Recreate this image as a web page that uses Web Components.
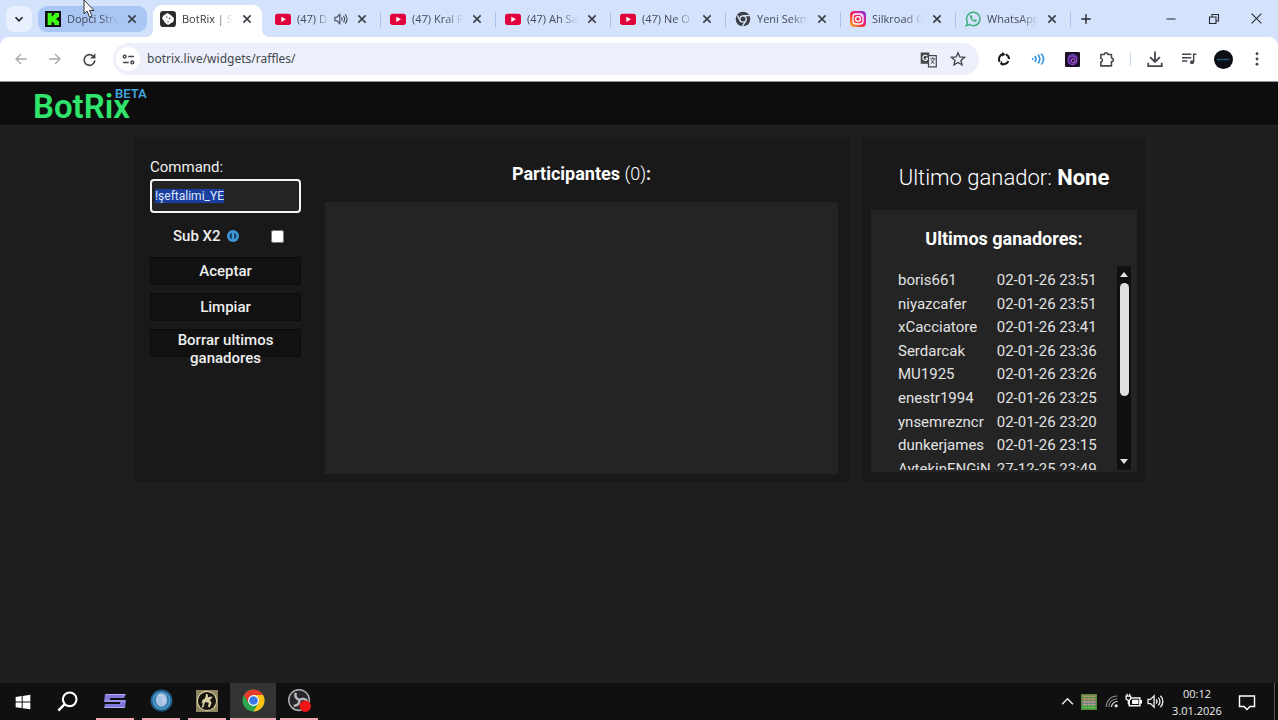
<!DOCTYPE html>
<html lang="es">
<head>
<meta charset="utf-8">
<title>BotRix | Sorteos</title>
<style>
    html, body {
        height: 100%;
        margin: 0;
    }
    body {
        background: #1e1e1e;
        font-family: Roboto, "Liberation Sans", sans-serif;
        overflow: hidden;
    }
</style>
</head>
<body>
<app-desktop></app-desktop>

<script>
// every icon is drawn on a 24x24 grid
const ICONS = {
    chevronDown: '<path d="M6 9l6 6 6-6" fill="none" stroke="currentColor" stroke-width="3"/>',
    chevronUp: '<path d="M2 17L12 7l10 10" fill="none" stroke="currentColor" stroke-width="2.6"/>',
    close: '<path d="M6.500 6.500l11 11M17.500 6.500l-11 11" fill="none" stroke="currentColor" stroke-width="2.4"/>',
    plus: '<path d="M12 4v16M4 12h16" fill="none" stroke="currentColor" stroke-width="2.4"/>',
    minimize: '<path d="M3 12h18" stroke="currentColor" stroke-width="2"/>',
    restore: '<path d="M3 8h13v13H3zM8 8V3h13v13h-5" fill="none" stroke="currentColor" stroke-width="2.2"/>',
    windowClose: '<path d="M3 3l18 18M21 3L3 21" stroke="currentColor" stroke-width="1.9"/>',
    kick: '<rect width="24" height="24" fill="#111"/><path d="M4 3h6v5h2V6h2V3h7v6h-2v2h-2v2h2v2h2v6h-7v-3h-2v-2h-2v5H4z" fill="#3dff14"/>',
    botrix: '<rect x="0" y="0" width="24" height="24" rx="5" fill="#2b2c30"/><path d="M11 3l5 3 5 5-1 5-8 5-4-3-5-7 2-4z" fill="#fff"/><circle cx="10" cy="9" r="1.300" fill="#777"/><circle cx="14.500" cy="11" r="1.300" fill="#555"/><circle cx="12" cy="16" r="1.300" fill="#888"/>',
    youtube: '<rect x="0" y="4" width="24" height="17" rx="4" fill="#e0023a"/><path d="M9.500 8.500v8l7-4z" fill="#fff"/>',
    chromeGrey: '<circle cx="12" cy="12" r="11" fill="#3c4248"/><circle cx="12" cy="12" r="4.800" fill="#3c4248" stroke="#d9e4fb" stroke-width="2"/><path d="M12 7H22M7.700 14.500L3 6M16.300 14.500L11 23" stroke="#d9e4fb" stroke-width="2" fill="none"/>',
    instagram: '<defs><linearGradient id="ig" x1="0" y1="1" x2="1" y2="0"><stop offset="0" stop-color="#fdbf2d"/><stop offset=".4" stop-color="#f5343d"/><stop offset=".7" stop-color="#d6219a"/><stop offset="1" stop-color="#6a3af0"/></linearGradient></defs><rect width="24" height="24" rx="6" fill="url(#ig)"/><rect x="4.500" y="4.500" width="15" height="15" rx="4.500" fill="none" stroke="#fff" stroke-width="2"/><circle cx="12" cy="12" r="3.600" fill="none" stroke="#fff" stroke-width="2"/><circle cx="16.600" cy="7.400" r="1.200" fill="#fff"/>',
    whatsapp: '<path d="M2 22l1.600-5.400A10 10 0 1 1 7.300 20.500z" fill="none" stroke="#3fae7d" stroke-width="2.200"/><path d="M8.200 6.500c-3 2.500 3.300 11.500 8.300 9.500 1.500-1.200 1.300-2.300.500-2.800l-2-1-1.500 1.500c-1.600-.600-2.700-1.800-3.300-3.200l1-1.500-1-2.500z" fill="#3fae7d"/>',
    speaker: '<path d="M1.500 9v6h3.500l5 5V4L5 9z" fill="none" stroke="currentColor" stroke-width="1.900"/><path d="M13 9c1.500 2 1.500 4 0 6M16 6.500c3 3 3 8 0 11M19 4c4.500 4.500 4.500 11.500 0 16" fill="none" stroke="currentColor" stroke-width="1.900"/>',
    back: '<path d="M22 12H4M12 3.500L3.500 12l8.500 8.500" fill="none" stroke="currentColor" stroke-width="2.200"/>',
    forward: '<path d="M2 12h18M12 3.500l8.500 8.500-8.500 8.500" fill="none" stroke="currentColor" stroke-width="2.200"/>',
    reload: '<path d="M20 9.500A8.600 8.600 0 1 0 20.600 13.500" fill="none" stroke="currentColor" stroke-width="2.600"/><path d="M21.500 2v8.500H13z" fill="currentColor"/>',
    tune: '<g fill="none" stroke="currentColor" stroke-width="2.600"><circle cx="5" cy="6.500" r="2.600"/><circle cx="19" cy="17.500" r="2.600"/><path d="M11.500 6.500H22M2 17.500h10.500"/></g>',
    translate: '<path d="M1 2h12l2 16H1z" fill="#44474c"/><path d="M10.500 7.500a3.600 3.600 0 1 0 .5 3H8" fill="none" stroke="#fff" stroke-width="1.600"/><path d="M12 6.500h11v16H12z" fill="#f2f3fb" stroke="#44474c" stroke-width="1.700"/><path d="M14.500 11h7M18 9v2M20 11c-.600 3-2.500 5.500-5 7M15.800 13c1 2.200 2.600 3.800 4.700 5" fill="none" stroke="#44474c" stroke-width="1.400"/>',
    star: '<path d="M12 2.500l2.700 6.400 7 .600-5.300 4.600 1.600 6.800-6-3.600-6 3.600 1.600-6.800L2.300 9.500l7-.600z" fill="none" stroke="currentColor" stroke-width="2"/>',
    sync: '<path d="M11 3.500A8.600 8.600 0 0 0 5 17M8 20a8.600 8.600 0 0 0 11.500-4.500M20.600 12A8.600 8.600 0 0 0 15 4" fill="none" stroke="#15171a" stroke-width="3.400"/><path d="M9 0l5.500 4L9 8zM10.500 24L5 20.500 8 15z" fill="#15171a"/>',
    waves: '<circle cx="3" cy="12" r="1.800" fill="#3598e6"/><path d="M6.500 7c2.500 3 2.500 7 0 10M12 4.500c4 4 4 11 0 15M17.500 2.500c5.500 5.500 5.500 13.500 0 19" fill="none" stroke="#3598e6" stroke-width="2.800"/>',
    orbit: '<rect width="24" height="24" rx="2" fill="#1a1028"/><circle cx="12" cy="13" r="7" fill="#4b1f7a" stroke="#8f48cf" stroke-width="2"/><circle cx="13" cy="14" r="3" fill="#1a1028" stroke="#d07ae8" stroke-width="1.400"/><path d="M4 8c5-6 13-5 16 1" fill="none" stroke="#6b4bd0" stroke-width="1.600"/>',
    puzzle: '<path d="M4 5h5c0-3.500 5-3.500 5 0h5v5c3.500 0 3.500 5 0 5v6H4v-5.500c3-.500 3-4.500 0-5z" fill="none" stroke="currentColor" stroke-width="2.200" stroke-linejoin="round"/>',
    download: '<path d="M12 2v13M5.500 9.500L12 16l6.500-6.500M3 17v4.500h18V17" fill="none" stroke="currentColor" stroke-width="2.400"/>',
    music: '<path d="M1.500 5h14M1.500 10h14M1.500 15h8M19 17V5h4" fill="none" stroke="currentColor" stroke-width="2.200"/><circle cx="16.500" cy="17" r="3" fill="currentColor"/>',
    avatar: '<circle cx="12" cy="12" r="12" fill="#0b0e13"/><path d="M4 12h16" stroke="#2f6f96" stroke-width="1.800" stroke-dasharray="2 .600"/>',
    dots: '<g fill="currentColor"><circle cx="12" cy="5" r="1.900"/><circle cx="12" cy="12" r="1.900"/><circle cx="12" cy="19" r="1.900"/></g>',
    info: '<circle cx="12" cy="12" r="12" fill="#3d97d6"/><path d="M9.500 5.500a7 7 0 0 0 0 13zM14.500 5.500a7 7 0 0 1 0 13z" fill="#173a5c"/>',
    windows: '<path d="M1 4.500l9-1.400v8.300H1zM11.500 2.900L23 1v10.400H11.500zM1 12.800h9v8.300l-9-1.400zM11.500 12.800H23V23l-11.500-1.800z" fill="#fff"/>',
    search: '<circle cx="14.500" cy="9.500" r="7.800" fill="none" stroke="#fff" stroke-width="2.400"/><path d="M8.800 15L1.500 22.500" stroke="#fff" stroke-width="2.800"/>',
    sLogo: '<path d="M3 5h20l-2 4H7v2h16l-1 8H1l1-4h15v-2H1l1-8z" fill="#8078d8"/><path d="M3 5.500h19M2 12h20M2 18.500h20" stroke="#b3adf5" stroke-width="1"/>',
    orb: '<circle cx="12" cy="12" r="11.500" fill="#235a86"/><circle cx="12" cy="12" r="9.500" fill="#4a9ccc"/><circle cx="12" cy="12" r="7.800" fill="#3478aa"/><ellipse cx="12" cy="11.500" rx="6" ry="7" fill="#a9c3e4"/><path d="M9 6.500c4-1 7 3 5 8" stroke="#d5e2f2" fill="none"/>',
    rider: '<rect width="24" height="24" fill="#8d8560"/><circle cx="12" cy="12" r="10.500" fill="#17150f" stroke="#d8cfa2" stroke-width="1.200"/><path d="M11 4l2 1v3l4-1 1 1-3 3 2 3-2 5-2-1 1-4-4-1-2 6H6l2-5-2 1 1-4 3-2z" fill="#d8cfa2"/>',
    chrome: '<circle cx="12" cy="12" r="11.500" fill="#2da44e"/><path d="M12 23.500A11.500 11.500 0 0 0 22 6.300H12l4.900 8.500z" fill="#fbc116"/><path d="M2 6.300a11.500 11.500 0 0 1 20 0H12l-4.900 8.500z" fill="#e33b2e"/><circle cx="12" cy="12" r="5.700" fill="#fff"/><circle cx="12" cy="12" r="4.500" fill="#3b78e7"/>',
    obs: '<circle cx="11.500" cy="11.500" r="10.800" fill="#25252a" stroke="#a9a9ad" stroke-width="1.600"/><path d="M8 4c-1 4 1 6.500 4 7.500 0 4-2 6-6 6M12 11.500c3-2 6-1.500 8 1" fill="none" stroke="#b9b9bd" stroke-width="2.600"/><circle cx="18" cy="18" r="6" fill="#f01414"/>',
    pixels: '<rect width="24" height="24" fill="#4f8a3c"/><rect x="2" y="2" width="20" height="9" fill="#a98a62"/><rect x="2" y="11" width="20" height="6" fill="#b884a8"/><rect x="2" y="17" width="20" height="5" fill="#55b848"/><path d="M2 5h20M2 9h20M2 14h20M2 19h20" stroke="#2f8a55" stroke-width="1.200"/><path d="M6 3v18M12 3v18M18 3v18" stroke="#d8c86a" stroke-width="1.400" stroke-dasharray="1.500 2.500"/>',
    wifi: '<path d="M2 22C2 11 11 2 23 2M7 22c0-8 7-15 16-15" fill="none" stroke="#8b8e92" stroke-width="1.900"/><path d="M12 22c0-5.500 5-10 11-10" fill="none" stroke="#e8e8e8" stroke-width="2.200"/><circle cx="20.500" cy="20" r="3" fill="#e8e8e8"/>',
    battery: '<rect x="6" y="7" width="15" height="11" fill="none" stroke="#fff" stroke-width="2"/><path d="M22.500 10v5" stroke="#fff" stroke-width="3"/><rect x="10" y="9.500" width="9" height="6" fill="#fff"/><path d="M1.500 4.500h6.500v4L4.750 11 1.500 8.500zM3 1v4M6.500 1v4M4.750 11v5" stroke="#fff" stroke-width="1.800" fill="#101010"/>',
    notice: '<path d="M2 4h20v14h-6l-4 4-4-4H2z" fill="none" stroke="#fff" stroke-width="1.900"/>'
}

class UiIcon extends HTMLElement {
    constructor() {
        super()
        this.attachShadow({ mode: 'open' })
    }

    connectedCallback() {
        const size = this.getAttribute('size') || 16
        this.shadowRoot.innerHTML = `
            <style>
                :host {
                    display: block;
                    flex: none;
                }
                svg {
                    display: block;
                }
            </style>
            <svg width="${size}" height="${size}" viewBox="0 0 24 24" aria-hidden="true">${ICONS[this.getAttribute('name')]}</svg>
        `
    }
}

customElements.define('ui-icon', UiIcon)


class BrowserTab extends HTMLElement {
    constructor() {
        super()
        this.attachShadow({ mode: 'open' })
    }

    connectedCallback() {
        const audio = this.hasAttribute('audio') ? '<ui-icon name="speaker" size="14"></ui-icon>' : ''
        this.shadowRoot.innerHTML = `
            <style>
                :host {
                    position: relative;
                    display: flex;
                    align-items: center;
                    gap: 6px;
                    flex: 0 1 109px;
                    min-width: 0;
                    height: 26px;
                    box-sizing: border-box;
                    margin: 6px 6px 5px 0;
                    padding: 0 7px;
                    color: #434a58;
                    border-radius: 9px;
                }
                :host([hovered]) {
                    background: #a9c6f5;
                }
                :host([active]) {
                    height: 32px;
                    margin: 5px 6px 0 0;
                    padding-bottom: 4px;
                    background: #fff;
                    color: #33373d;
                    border-radius: 9px 9px 0 0;
                }
                /* curved feet of the selected tab */
                :host([active])::before, :host([active])::after {
                    content: "";
                    position: absolute;
                    bottom: 0;
                    width: 8px;
                    height: 8px;
                }
                :host([active])::before {
                    right: 100%;
                    background: radial-gradient(circle at 0 0, transparent 8px, #fff 8px);
                }
                :host([active])::after {
                    left: 100%;
                    background: radial-gradient(circle at 100% 0, transparent 8px, #fff 8px);
                }
                :host([divided])::after {
                    content: "";
                    position: absolute;
                    right: -4px;
                    width: 1px;
                    height: 15px;
                    background: #a8c1ec;
                }
                .title {
                    flex: 1;
                    min-width: 0;
                    overflow: hidden;
                    white-space: nowrap;
                    font: 11px/18px "Open Sans", sans-serif;
                    -webkit-mask-image: linear-gradient(to right, #000 65%, transparent);
                    mask-image: linear-gradient(to right, #000 65%, transparent);
                }
                button {
                    flex: none;
                    padding: 0;
                    border: 0;
                    background: none;
                    color: #3b4048;
                }
            </style>
            <ui-icon name="${this.getAttribute('icon')}"></ui-icon>
            <span class="title"><slot></slot></span>
            ${audio}
            <button type="button" aria-label="Cerrar"><ui-icon name="close" size="16"></ui-icon></button>
        `
    }
}

customElements.define('browser-tab', BrowserTab)


class TabStrip extends HTMLElement {
    constructor() {
        super()
        this.attachShadow({ mode: 'open' })
        this.shadowRoot.innerHTML = `
            <style>
                :host {
                    display: flex;
                    align-items: center;
                    height: 37px;
                    background: #d5e2fc;
                    color: #24272c;
                }
                button {
                    display: flex;
                    align-items: center;
                    justify-content: center;
                    flex: none;
                    padding: 0;
                    border: 0;
                    background: none;
                    color: inherit;
                }
                .list {
                    width: 26px;
                    height: 26px;
                    margin: 0 6px;
                    border-radius: 8px;
                    background: #e8f0fe;
                }
                .tabs {
                    display: flex;
                    align-items: center;
                    flex: 0 1 1035px;
                    min-width: 0;
                }
                .new {
                    width: 26px;
                    height: 26px;
                }
                .controls {
                    display: flex;
                    margin-left: auto;
                }
                .controls button {
                    width: 43px;
                    height: 37px;
                }
            </style>
            <button class="list" type="button" aria-label="Buscar pestañas"><ui-icon name="chevronDown" size="14"></ui-icon></button>
            <div class="tabs">
                <browser-tab icon="kick" hovered>Dopci Stre</browser-tab>
                <browser-tab icon="botrix" active>BotRix | So</browser-tab>
                <browser-tab icon="youtube" audio divided>(47) D</browser-tab>
                <browser-tab icon="youtube" divided>(47) Kral F</browser-tab>
                <browser-tab icon="youtube" divided>(47) Ah Sa</browser-tab>
                <browser-tab icon="youtube" divided>(47) Ne O</browser-tab>
                <browser-tab icon="chromeGrey" divided>Yeni Sekm</browser-tab>
                <browser-tab icon="instagram" divided>Silkroad O</browser-tab>
                <browser-tab icon="whatsapp" divided>WhatsApp</browser-tab>
            </div>
            <button class="new" type="button" aria-label="Nueva pestaña"><ui-icon name="plus" size="14"></ui-icon></button>
            <div class="controls">
                <button type="button" aria-label="Minimizar"><ui-icon name="minimize" size="12"></ui-icon></button>
                <button type="button" aria-label="Restaurar"><ui-icon name="restore" size="12"></ui-icon></button>
                <button type="button" aria-label="Cerrar"><ui-icon name="windowClose" size="13"></ui-icon></button>
            </div>
        `
    }
}

customElements.define('tab-strip', TabStrip)


class AddressBar extends HTMLElement {
    constructor() {
        super()
        this.attachShadow({ mode: 'open' })
        this.shadowRoot.innerHTML = `
            <style>
                :host {
                    display: block;
                    background: #d5e2fc;
                }
                .bar {
                    display: flex;
                    align-items: center;
                    height: 45px;
                    padding: 0 4px;
                    background: #fff;
                    border-radius: 9px 9px 0 0;
                    border-bottom: 1px solid #8d9095;
                    box-sizing: border-box;
                    color: #43474d;
                }
                button {
                    display: flex;
                    align-items: center;
                    justify-content: center;
                    flex: none;
                    width: 34px;
                    height: 32px;
                    padding: 0;
                    border: 0;
                    background: none;
                    color: inherit;
                }
                button:disabled {
                    color: #a5a8ac;
                }
                .url {
                    display: flex;
                    align-items: center;
                    flex: 1;
                    height: 32px;
                    margin: 0 8px 0 7px;
                    padding: 0 6px 0 3px;
                    border-radius: 16px;
                    background: #edf0fa;
                }
                .url .site {
                    width: 24px;
                    height: 24px;
                    border-radius: 12px;
                    background: #fff;
                }
                .url .action {
                    width: 30px;
                }
                input {
                    flex: 1;
                    min-width: 0;
                    margin: 0 0 0 7px;
                    padding: 0;
                    border: 0;
                    outline: 0;
                    background: none;
                    color: #43474e;
                    font: 12px/20px "Noto Sans", sans-serif;
                }
                .divider {
                    width: 1px;
                    height: 14px;
                    margin: 0 7px;
                    background: #ccd9f3;
                }
            </style>
            <div class="bar">
                <button type="button" disabled aria-label="Atrás"><ui-icon name="back" size="14"></ui-icon></button>
                <button type="button" disabled aria-label="Adelante"><ui-icon name="forward" size="14"></ui-icon></button>
                <button type="button" aria-label="Recargar"><ui-icon name="reload" size="15"></ui-icon></button>
                <div class="url">
                    <button class="site" type="button" aria-label="Información del sitio"><ui-icon name="tune" size="13"></ui-icon></button>
                    <input type="text" aria-label="Dirección" value="botrix.live/widgets/raffles/">
                    <button class="action" type="button" aria-label="Traducir"><ui-icon name="translate" size="17"></ui-icon></button>
                    <button class="action" type="button" aria-label="Marcador"><ui-icon name="star" size="16"></ui-icon></button>
                </div>
                <button type="button" aria-label="Sync"><ui-icon name="sync" size="14"></ui-icon></button>
                <button type="button" aria-label="Audio"><ui-icon name="waves" size="14"></ui-icon></button>
                <button type="button" aria-label="Orbit"><ui-icon name="orbit" size="15"></ui-icon></button>
                <button type="button" aria-label="Extensiones"><ui-icon name="puzzle" size="17"></ui-icon></button>
                <span class="divider"></span>
                <button type="button" aria-label="Descargas"><ui-icon name="download" size="18"></ui-icon></button>
                <button type="button" aria-label="Multimedia"><ui-icon name="music" size="16"></ui-icon></button>
                <button type="button" aria-label="Perfil"><ui-icon name="avatar" size="19"></ui-icon></button>
                <button type="button" aria-label="Menú"><ui-icon name="dots" size="18"></ui-icon></button>
            </div>
        `
    }
}

customElements.define('address-bar', AddressBar)


class SiteHeader extends HTMLElement {
    constructor() {
        super()
        this.attachShadow({ mode: 'open' })
        this.shadowRoot.innerHTML = `
            <style>
                :host {
                    display: flex;
                    align-items: center;
                    height: 44px;
                    padding-left: 33px;
                    background: #0d0d0d;
                    border-bottom: 1px solid #262626;
                    box-sizing: border-box;
                }
                a {
                    position: relative;
                    margin-top: 6px;
                    color: #2fe56c;
                    font-size: 33px;
                    font-weight: 600;
                    line-height: 36px;
                    text-decoration: none;
                }
                .beta {
                    position: absolute;
                    top: -3px;
                    left: 82px;
                    color: #41a3dd;
                    font-size: 13px;
                    line-height: 16px;
                }
            </style>
            <a href="#">BotRix<span class="beta">BETA</span></a>
        `
    }
}

customElements.define('site-header', SiteHeader)


class RaffleForm extends HTMLElement {
    constructor() {
        super()
        this.attachShadow({ mode: 'open' })
        this.shadowRoot.innerHTML = `
            <style>
                :host {
                    display: block;
                    width: 151px;
                    color: #eee;
                }
                form {
                    display: flex;
                    flex-direction: column;
                }
                .command {
                    margin-bottom: 2px;
                    font-size: 15px;
                    line-height: 20px;
                }
                input[type=text] {
                    width: 100%;
                    height: 34px;
                    box-sizing: border-box;
                    padding: 0 3px;
                    border: 2px solid #f5f5f5;
                    border-radius: 4px;
                    outline: 0;
                    background: #242424;
                    color: #eee;
                    font: 12px/16px Roboto, sans-serif;
                }
                input[type=text]::selection {
                    background: #1a3f9f;
                    color: #dfe6fa;
                }
                .sub {
                    display: flex;
                    align-items: center;
                    height: 20px;
                    margin: 13px 0 11px;
                    padding: 0 17px 0 23px;
                    font-size: 15px;
                    font-weight: 500;
                }
                .sub ui-icon {
                    margin-left: 6px;
                }
                .sub input {
                    width: 13px;
                    height: 13px;
                    margin: 0 0 0 auto;
                }
                button {
                    height: 28px;
                    margin-bottom: 8px;
                    padding: 1px 6px;
                    border: 1px solid #0c0c0c;
                    border-radius: 2px;
                    background: #111;
                    color: #eee;
                    font: 500 15px/18px Roboto, sans-serif;
                }
            </style>
            <form>
                <label class="command" for="command">Command:</label>
                <input type="text" id="command" value="!şeftalimi_YE">
                <div class="sub">
                    <label for="subs">Sub X2</label>
                    <ui-icon name="info" size="12"></ui-icon>
                    <input type="checkbox" id="subs">
                </div>
                <button type="button">Aceptar</button>
                <button type="button">Limpiar</button>
                <button type="button">Borrar ultimos ganadores</button>
            </form>
        `
    }

    connectedCallback() {
        const command = this.shadowRoot.querySelector('#command')
        command.focus()
        command.select()
    }
}

customElements.define('raffle-form', RaffleForm)


class RaffleParticipants extends HTMLElement {
    constructor() {
        super()
        this.attachShadow({ mode: 'open' })
        this.shadowRoot.innerHTML = `
            <style>
                :host {
                    display: flex;
                    flex-direction: column;
                    flex: 1;
                    color: #fff;
                }
                h2 {
                    margin: 9px 0 16px;
                    font-size: 18px;
                    font-weight: 700;
                    line-height: 24px;
                    text-align: center;
                }
                h2 span {
                    font-weight: 300;
                }
                .list {
                    flex: 1;
                    min-height: 272px;
                    background: #242424;
                }
            </style>
            <h2>Participantes <span>(0)</span>:</h2>
            <div class="list"></div>
        `
    }
}

customElements.define('raffle-participants', RaffleParticipants)


class RaffleWinners extends HTMLElement {
    constructor() {
        super()
        this._winners = [
            ['boris661', '02-01-26 23:51'],
            ['niyazcafer', '02-01-26 23:51'],
            ['xCacciatore', '02-01-26 23:41'],
            ['Serdarcak', '02-01-26 23:36'],
            ['MU1925', '02-01-26 23:26'],
            ['enestr1994', '02-01-26 23:25'],
            ['ynsemrezncr', '02-01-26 23:20'],
            ['dunkerjames', '02-01-26 23:15'],
            ['AytekinENGiN', '27-12-25 23:49']
        ]
        this.attachShadow({ mode: 'open' })
        this.shadowRoot.innerHTML = `
            <style>
                :host {
                    display: flex;
                    flex-direction: column;
                    color: #fff;
                }
                h1 {
                    margin: 17px 0 17px;
                    font-size: 22px;
                    font-weight: 300;
                    line-height: 30px;
                    text-align: center;
                }
                h1 b {
                    font-weight: 700;
                }
                .box {
                    padding: 17px 6px 2px 24px;
                    background: #242424;
                }
                h2 {
                    margin: 0 18px 15px 0;
                    font-size: 18px;
                    font-weight: 700;
                    line-height: 24px;
                    text-align: center;
                }
                .scroller {
                    display: flex;
                    height: 204px;
                }
                .view {
                    flex: 1;
                    overflow-y: auto;
                    scrollbar-width: none;
                }
                table {
                    height: 212px;
                    border-spacing: 0;
                    color: #e2e2e2;
                    font-size: 15px;
                    line-height: 18px;
                }
                td {
                    padding: 5px 3px 0;
                    white-space: nowrap;
                }
                .track {
                    display: flex;
                    flex-direction: column;
                    align-items: center;
                    width: 14px;
                    padding: 6px 0;
                    box-sizing: border-box;
                    background: #101010;
                }
                .up, .down {
                    border: 4px solid transparent;
                }
                .up {
                    border-top: 0;
                    border-bottom: 5px solid #e4e4e4;
                }
                .down {
                    margin-top: auto;
                    border-bottom: 0;
                    border-top: 5px solid #e4e4e4;
                }
                .thumb {
                    width: 9px;
                    height: 59%;
                    margin-top: 6px;
                    border-radius: 5px;
                    background: #e0e0e0;
                }
            </style>
            <h1>Ultimo ganador: <b>None</b></h1>
            <div class="box">
                <h2>Ultimos ganadores:</h2>
                <div class="scroller">
                    <div class="view">
                        <table><tbody></tbody></table>
                    </div>
                    <div class="track">
                        <span class="up"></span>
                        <span class="thumb"></span>
                        <span class="down"></span>
                    </div>
                </div>
            </div>
        `
    }

    connectedCallback() {
        this._render()
    }

    _render() {
        const body = this.shadowRoot.querySelector('tbody')
        body.innerHTML = this._winners.map(([name, date]) => `<tr><td>${name}</td><td>${date}</td></tr>`).join('')
    }
}

customElements.define('raffle-winners', RaffleWinners)


class TaskBar extends HTMLElement {
    constructor() {
        super()
        this.attachShadow({ mode: 'open' })
        this.shadowRoot.innerHTML = `
            <style>
                :host {
                    display: flex;
                    height: 37px;
                    background: #101010;
                    color: #eee;
                }
                button {
                    display: flex;
                    align-items: center;
                    justify-content: center;
                    flex: none;
                    width: 45px;
                    padding: 0;
                    border: 0;
                    background: none;
                    color: inherit;
                }
                .open {
                    width: 38px;
                    margin: 0 4px;
                    border-bottom: 2px solid #f3a9b5;
                }
                .active {
                    width: 46px;
                    margin: 0;
                    background: #333;
                }
                .search {
                    margin-right: 2px;
                }
                .tray {
                    display: flex;
                    align-items: center;
                    margin-left: auto;
                }
                .tray button {
                    width: 22px;
                    height: 36px;
                }
                .tray .clock {
                    display: block;
                    width: 62px;
                    font: 11px/17px "Open Sans", sans-serif;
                    text-align: center;
                }
                .tray .notice {
                    width: 38px;
                }
                .edge {
                    width: 3px;
                    height: 37px;
                    margin-left: 8px;
                    border-left: 1px solid #555;
                }
                time {
                    display: block;
                }
            </style>
            <button type="button" aria-label="Inicio"><ui-icon name="windows" size="16"></ui-icon></button>
            <button class="search" type="button" aria-label="Buscar"><ui-icon name="search" size="21"></ui-icon></button>
            <button class="open" type="button" aria-label="S"><ui-icon name="sLogo" size="24"></ui-icon></button>
            <button class="open" type="button" aria-label="Orb"><ui-icon name="orb" size="23"></ui-icon></button>
            <button class="open" type="button" aria-label="Silkroad"><ui-icon name="rider" size="22"></ui-icon></button>
            <button class="open active" type="button" aria-label="Chrome"><ui-icon name="chrome" size="23"></ui-icon></button>
            <button class="open" type="button" aria-label="OBS"><ui-icon name="obs" size="23"></ui-icon></button>
            <div class="tray">
                <button type="button" aria-label="Iconos ocultos"><ui-icon name="chevronUp" size="13"></ui-icon></button>
                <button type="button" aria-label="Monitor"><ui-icon name="pixels" size="16"></ui-icon></button>
                <button type="button" aria-label="Wi-Fi"><ui-icon name="wifi" size="13"></ui-icon></button>
                <button type="button" aria-label="Batería"><ui-icon name="battery" size="17"></ui-icon></button>
                <button type="button" aria-label="Volumen"><ui-icon name="speaker" size="17"></ui-icon></button>
                <button class="clock" type="button"><time>00:12</time><time>3.01.2026</time></button>
                <button class="notice" type="button" aria-label="Notificaciones"><ui-icon name="notice" size="18"></ui-icon></button>
                <span class="edge"></span>
            </div>
        `
    }
}

customElements.define('task-bar', TaskBar)


class AppDesktop extends HTMLElement {
    constructor() {
        super()
        this.attachShadow({ mode: 'open' })
        this.shadowRoot.innerHTML = `
            <style>
                :host {
                    display: flex;
                    flex-direction: column;
                    height: 100vh;
                }
                main {
                    display: flex;
                    flex: 1;
                    gap: 11px;
                    align-items: flex-start;
                    width: 100%;
                    max-width: 1012px;
                    margin: 11px auto 0;
                }
                section {
                    box-sizing: border-box;
                    min-height: 345px;
                    background: #191919;
                }
                .raffle {
                    display: flex;
                    flex: 1;
                    gap: 24px;
                    padding: 16px 13px 8px 17px;
                }
                raffle-form {
                    margin-top: 4px;
                }
                .winners {
                    flex: 0 0 283px;
                    padding: 9px 8px 9px 9px;
                }
                /* mouse pointer */
                .pointer {
                    position: absolute;
                    top: 0;
                    left: 83px;
                }
            </style>
            <tab-strip></tab-strip>
            <address-bar></address-bar>
            <site-header></site-header>
            <main>
                <section class="raffle">
                    <raffle-form></raffle-form>
                    <raffle-participants></raffle-participants>
                </section>
                <section class="winners">
                    <raffle-winners></raffle-winners>
                </section>
            </main>
            <task-bar></task-bar>
            <svg class="pointer" width="12" height="18" viewBox="0 0 12 18" aria-hidden="true">
                <path d="M1 0v14l3-3 2.500 6 2.500-1-2.500-5.500H11z" fill="#fff" stroke="#333" stroke-width="1"/>
            </svg>
        `
    }
}

customElements.define('app-desktop', AppDesktop)
</script>
</body>
</html>
